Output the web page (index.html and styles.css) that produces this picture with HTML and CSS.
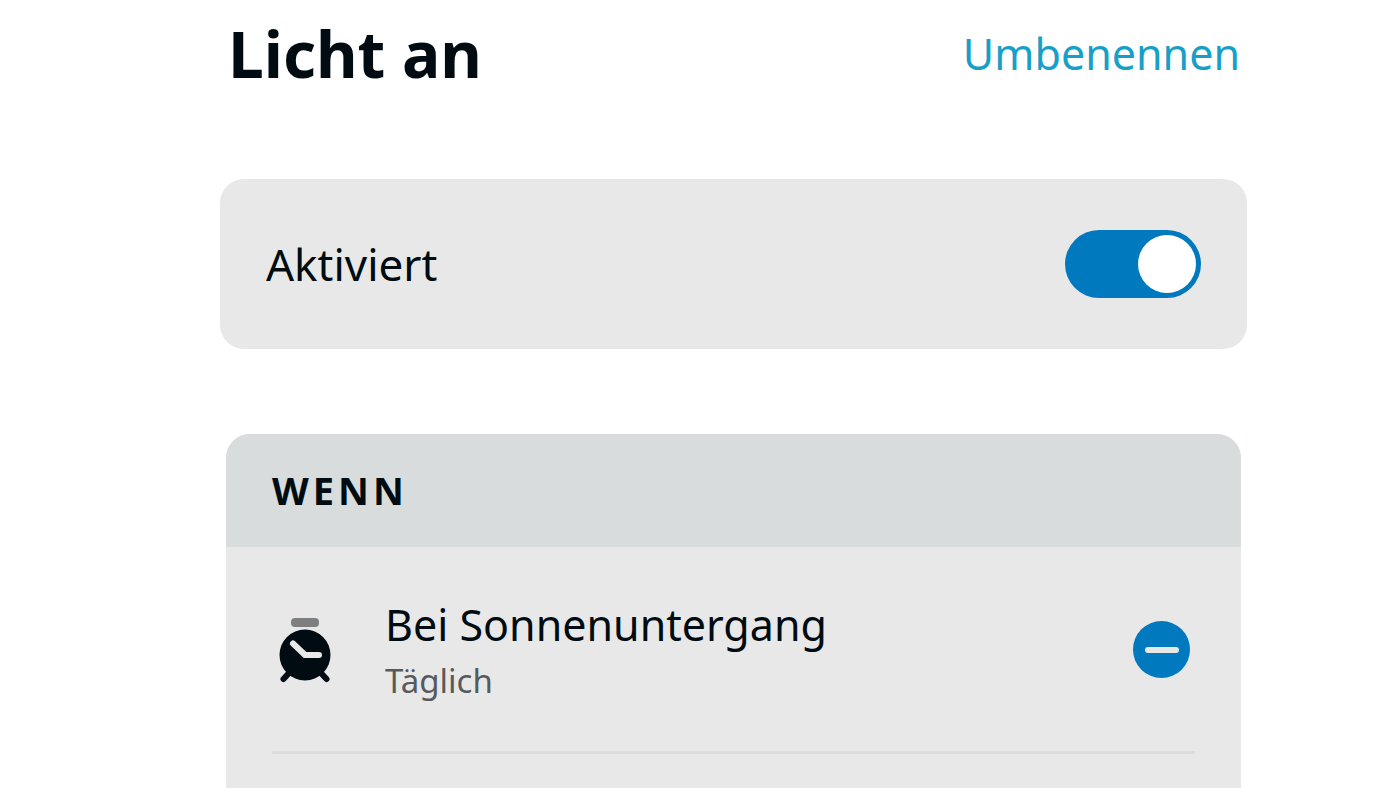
FILE: index.html
```html
<!DOCTYPE html>
<html lang="de">
<head>
<meta charset="utf-8">
<meta name="viewport" content="width=device-width, initial-scale=1">
<title>Licht an</title>
<link rel="stylesheet" href="styles.css">
</head>
<body>
<main class="page">
  <header class="header">
    <h1 class="title">Licht an</h1>
    <a class="rename" href="#">Umbenennen</a>
  </header>
  <section class="card">
    <label class="card-label" for="enabled">Aktiviert</label>
    <input class="switch" type="checkbox" role="switch" id="enabled" checked>
  </section>
  <section class="panel">
    <h2 class="panel-title">WENN</h2>
    <div class="trigger">
      <svg class="clock" viewBox="0 0 52 66" aria-hidden="true">
        <rect class="clock-bell" x="12" y="0" width="28" height="9" rx="4"/>
        <path class="clock-legs" d="M10 55L4.500 61M42 55l5.500 6"/>
        <circle class="clock-face" cx="26" cy="37" r="25.500"/>
        <path class="clock-hands" d="M14 25.500L26 37H40"/>
      </svg>
      <div class="trigger-text">
        <span class="trigger-name">Bei Sonnenuntergang</span>
        <span class="trigger-detail">Täglich</span>
      </div>
      <button class="remove" type="button" aria-label="Entfernen"><span class="remove-bar"></span></button>
    </div>
  </section>
</main>
</body>
</html>
```

FILE: styles.css
```css
* {
  box-sizing: border-box;
}

body {
  margin: 0;
  background: #fff;
  color: #000c12;
  font-family: "Noto Sans", "Open Sans", sans-serif;
  font-size: 43px;
  line-height: 60px;
  height: 100vh;
  overflow: hidden;
}

.page {
  display: flex;
  flex-direction: column;
  min-height: 100vh;
  padding: 10px 153px 0 220px;
}

.header {
  display: flex;
  align-items: center;
  justify-content: space-between;
  margin-bottom: 81px;
  padding: 0 7px 0 8px;
}

.title {
  margin: 0;
  font-size: 64px;
  line-height: 88px;
  font-weight: 700;
}

.rename {
  color: #189fc8;
  text-decoration: none;
}

.card {
  display: flex;
  align-items: center;
  justify-content: space-between;
  margin-bottom: 85px;
  padding: 51px 46px;
  border-radius: 24px;
  background: #e8e8e8;
}

.card-label {
  font-size: 44px;
}

.switch {
  appearance: none;
  display: flex;
  align-items: center;
  width: 136px;
  height: 68px;
  margin: 0;
  padding: 5px;
  border-radius: 34px;
  background: #a5abae;
}

.switch::before {
  content: "";
  width: 58px;
  height: 58px;
  border-radius: 50%;
  background: #fff;
}

.switch:checked {
  justify-content: flex-end;
  background: #0079bf;
}

.panel {
  flex: 1;
  margin: 0 6px;
  border-radius: 24px 24px 0 0;
  background: #e8e8e8;
  overflow: hidden;
}

.panel-title {
  margin: 0;
  padding: 26px 46px 27px;
  background: #d8dcdd;
  font-size: 38px;
  line-height: 60px;
  font-weight: 700;
  letter-spacing: 4px;
}

.trigger {
  display: flex;
  align-items: center;
  margin: 0 46px;
  padding: 48px 5px 44px 7px;
  border-bottom: 3px solid #dcdcdc;
}

.clock {
  width: 52px;
  height: 66px;
  margin-right: 54px;
}

.clock-bell {
  fill: #7d7f80;
}

.clock-face {
  fill: #000c12;
}

.clock-legs,
.clock-hands {
  fill: none;
  stroke-linecap: round;
  stroke-linejoin: round;
}

.clock-legs {
  stroke: #000c12;
  stroke-width: 6;
}

.clock-hands {
  stroke: #e8e8e8;
  stroke-width: 6;
}

.trigger-text {
  display: flex;
  flex: 1;
  flex-direction: column;
}

.trigger-detail {
  color: #565a5c;
  font-size: 33px;
  line-height: 52px;
}

.remove {
  display: flex;
  align-items: center;
  justify-content: center;
  width: 57px;
  height: 57px;
  margin-bottom: 3px;
  padding: 0;
  border: 0;
  border-radius: 50%;
  background: #0079bf;
}

.remove-bar {
  width: 34px;
  height: 6px;
  border-radius: 3px;
  background: #e8e8e8;
}
```
